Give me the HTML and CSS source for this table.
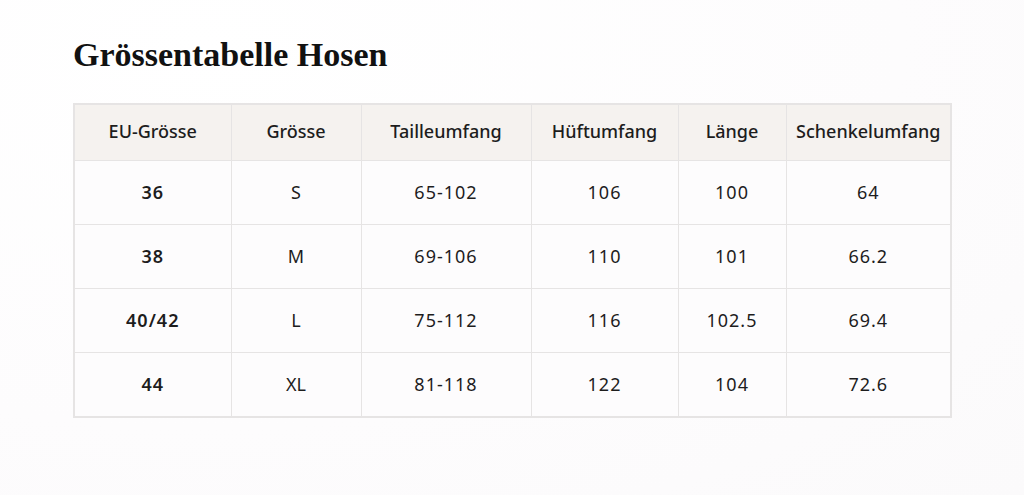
FILE: index.html
```html
<!DOCTYPE html>
<html lang="de">
<head>
<meta charset="utf-8">
<title>Grössentabelle Hosen</title>
<link rel="stylesheet" href="styles.css">
</head>
<body>
<main class="page">
  <h1 class="title">Grössentabelle Hosen</h1>
  <table class="sizes">
    <colgroup>
      <col class="c1"><col class="c2"><col class="c3"><col class="c4"><col class="c5"><col class="c6">
    </colgroup>
    <thead>
      <tr><th>EU-Grösse</th><th>Grösse</th><th>Tailleumfang</th><th>Hüftumfang</th><th>Länge</th><th>Schenkelumfang</th></tr>
    </thead>
    <tbody>
      <tr><td class="eu">36</td><td>S</td><td class="num">65-102</td><td class="num">106</td><td class="num">100</td><td class="num">64</td></tr>
      <tr><td class="eu">38</td><td>M</td><td class="num">69-106</td><td class="num">110</td><td class="num">101</td><td class="num">66.2</td></tr>
      <tr><td class="eu">40/42</td><td>L</td><td class="num">75-112</td><td class="num">116</td><td class="num">102.5</td><td class="num">69.4</td></tr>
      <tr><td class="eu">44</td><td>XL</td><td class="num">81-118</td><td class="num">122</td><td class="num">104</td><td class="num">72.6</td></tr>
    </tbody>
  </table>
</main>
</body>
</html>
```

FILE: styles.css
```css
html, body {
  margin: 0;
  padding: 0;
}
body {
  width: 1024px;
  height: 495px;
  overflow: hidden;
  background: radial-gradient(ellipse at 20% 10%, #ffffff 0%, #fdfcfd 60%, #fbfafb 100%);
  font-family: "Noto Sans", "Open Sans", sans-serif;
  color: #1d1d1d;
}
.page {
  padding: 37px 0 0 73px;
}
.title {
  margin: 0 0 30px 0;
  font-family: "Liberation Serif", "DejaVu Serif", serif;
  font-weight: 700;
  font-size: 34px;
  line-height: 36px;
  color: #111;
}
.sizes {
  border-collapse: collapse;
  table-layout: fixed;
  width: 877px;
  border: 2px solid #e6e4e4;
}
.c1 { width: 157px; }
.c2 { width: 130px; }
.c3 { width: 170px; }
.c4 { width: 147px; }
.c5 { width: 108px; }
.c6 { width: 165px; }
.sizes th, .sizes td {
  border: 1px solid #e6e4e4;
  text-align: center;
  font-size: 18px;
  padding: 0;
}
.sizes th {
  height: 52px;
  padding-bottom: 3px;
  background: #f5f2ef;
  font-weight: 500;
}
.sizes td {
  height: 61px;
  padding-bottom: 2px;
  background: #fdfcfd;
  font-weight: 400;
}
.sizes td.num,
.sizes td.eu {
  letter-spacing: 1px;
}
.sizes td.eu {
  font-weight: 600;
}
```
